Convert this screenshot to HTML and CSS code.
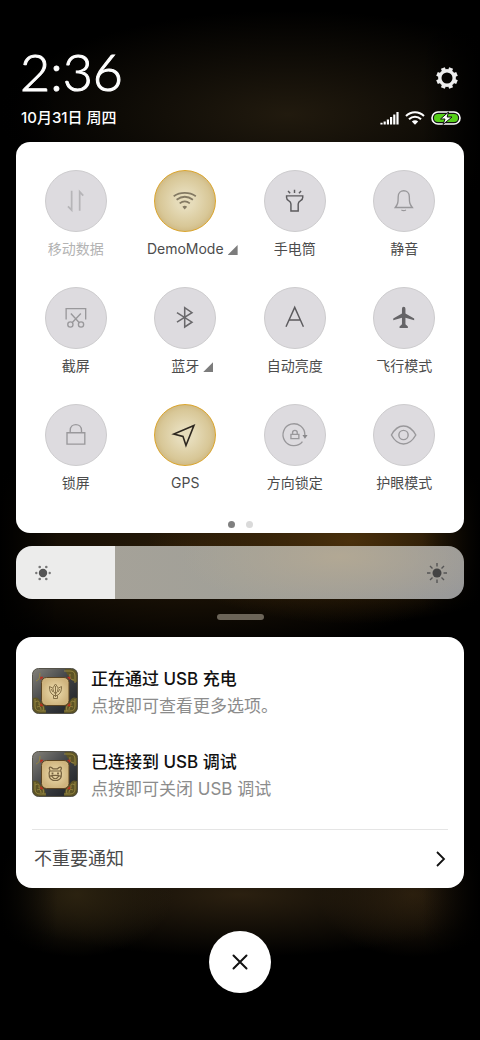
FILE: index.html
```
<!DOCTYPE html>
<html lang="zh-CN">
<head>
    <meta charset="UTF-8">
    <meta name="viewport" content="width=device-width, initial-scale=1.0">
    <title>控制中心</title>
    <link rel="stylesheet" href="styles.css">
</head>
<body>
    <!-- 时间、日期、状态图标 -->
    <header class="header">
        <div class="row">
            <time class="clock">2:36</time>
            <button class="gear" aria-label="设置">
                <svg width="24" height="24" viewBox="0 0 24 24">
                    <circle cx="12" cy="12" r="7.2" fill="none" stroke="#eee" stroke-width="3.4"/>
                    <g stroke="#eee" stroke-width="4.2">
                        <path d="M12 1.2V4" transform="rotate(22.5 12 12)"/>
                        <path d="M12 1.2V4" transform="rotate(67.5 12 12)"/>
                        <path d="M12 1.2V4" transform="rotate(112.5 12 12)"/>
                        <path d="M12 1.2V4" transform="rotate(157.5 12 12)"/>
                        <path d="M12 1.2V4" transform="rotate(202.5 12 12)"/>
                        <path d="M12 1.2V4" transform="rotate(247.5 12 12)"/>
                        <path d="M12 1.2V4" transform="rotate(292.5 12 12)"/>
                        <path d="M12 1.2V4" transform="rotate(337.5 12 12)"/>
                    </g>
                </svg>
            </button>
        </div>
        <div class="row">
            <span class="date">10月31日 周四</span>
            <div class="status">
                <svg width="19" height="14" viewBox="0 0 19 14" stroke="#fff" stroke-width="2.2">
                    <path d="M1.5 13.5V11.8M4.7 13.5V10.5M7.9 13.5V8.5M11.1 13.5V6M14.3 13.5V3.5M17.5 13.5V1"/>
                </svg>
                <svg width="20" height="14" viewBox="0 0 20 14" fill="none" stroke="#fff" stroke-width="2">
                    <path d="M1 5C6-.1 14-.1 19 5M4 8.3C7.5 4.8 12.5 4.8 16 8.3"/>
                    <path d="M6.8 10.6C8.6 8.8 11.4 8.8 13.2 10.6L10 13.8Z" fill="#fff" stroke="none"/>
                </svg>
                <svg width="30" height="14" viewBox="0 0 30 14">
                    <rect x="1" y="1" width="28" height="12" rx="6" fill="#111" stroke="#fff" stroke-width="1.6"/>
                    <rect x="3" y="3" width="24" height="8" rx="4" fill="#55cf18"/>
                    <path d="M17.5 1 9.5 8H14L12 13.5 21 6H16.2Z" fill="#fff" stroke="#111" stroke-width="1"/>
                </svg>
            </div>
        </div>
    </header>

    <main>
        <!-- 快捷开关 -->
        <section class="panel">
            <div class="tiles">
                <button class="tile disabled">
                    <svg class="disc" viewBox="0 0 62 62">
                        <path d="M22.7 36.5 26.5 40.5V20.5M34.8 41V21.5L38.5 25.5" stroke="#b6b5b8" stroke-width="1.8"/>
                    </svg>
                    <span class="label">移动数据</span>
                </button>
                <button class="tile on">
                    <svg class="disc" viewBox="0 0 62 62">
                        <g stroke="#847a63" stroke-width="1.8">
                            <path d="M19.3 26C26 21.5 35.5 21.5 42.2 26M22.3 29.7C27.5 25.9 34 25.9 39.2 29.7M25.5 33.5C28.8 30.9 32.7 30.9 36 33.5"/>
                        </g>
                        <path d="M30.7 39.8 28.3 37Q30.7 34.6 33.2 37Z" fill="#847a63"/>
                    </svg>
                    <span class="label">DemoMode<i class="corner"></i></span>
                </button>
                <button class="tile">
                    <svg class="disc" viewBox="0 0 62 62">
                        <path d="M30.5 19.5V22.8M23.8 20.7 26 23M37.3 20.7 35.1 23M22.3 25.7H39V27.5Q39 29.5 36.8 30.7 34.3 32 34.3 34V41.3H26.8V34Q26.8 32 24.4 30.7 22.3 29.5 22.3 27.5Z" stroke="#5c5b5e" stroke-width="1.5"/>
                    </svg>
                    <span class="label">手电筒</span>
                </button>
                <button class="tile">
                    <svg class="disc" viewBox="0 0 62 62">
                        <path d="M22 37.7C24.5 34.5 25 33 25 26.5 25 18.4 36.5 18.4 36.5 26.5 36.5 33 37 34.5 39.6 37.7ZM28.3 40.3Q30.7 41.7 33 40.3" stroke="#99989b" stroke-width="1.4"/>
                    </svg>
                    <span class="label">静音</span>
                </button>
                <button class="tile">
                    <svg class="disc" viewBox="0 0 62 62">
                        <g stroke="#99989b" stroke-width="1.4">
                            <path d="M20.8 32.5V21.3H41V32.5M25.7 26.3 34.2 35.7M36 26.3 27.2 35.7"/>
                            <circle cx="25.2" cy="37.7" r="2.7"/>
                            <circle cx="36.2" cy="37.7" r="2.7"/>
                        </g>
                    </svg>
                    <span class="label">截屏</span>
                </button>
                <button class="tile">
                    <svg class="disc" viewBox="0 0 62 62">
                        <path d="M22.7 25.5 38.2 35.3 30.7 40.3V20.3L38.2 25.5 22.7 35.2" stroke="#6a696c" stroke-width="1.6"/>
                    </svg>
                    <span class="label">蓝牙<i class="corner"></i></span>
                </button>
                <button class="tile">
                    <svg class="disc" viewBox="0 0 62 62">
                        <path d="M21.7 40 30.7 20 39.7 40M25 33H36.4" stroke="#5c5b5e" stroke-width="1.5"/>
                    </svg>
                    <span class="label">自动亮度</span>
                </button>
                <button class="tile">
                    <svg class="disc" viewBox="0 0 62 62">
                        <path d="M30.7 19.3Q32.5 19.3 32.5 21.5V26.3L41.5 31.5V33.3L32.5 30.8V37.5L35 39.8V41.3H26.4V39.8L28.9 37.5V30.8L19.9 33.3V31.5L28.9 26.3V21.5Q28.9 19.3 30.7 19.3Z" fill="#656467"/>
                    </svg>
                    <span class="label">飞行模式</span>
                </button>
                <button class="tile">
                    <svg class="disc" viewBox="0 0 62 62">
                        <path d="M21.7 28.7H40.1V40.5H21.7ZM25 28.5V26.3C25 18.3 36.7 18.3 36.7 26.3V28.5" stroke="#99989b" stroke-width="1.4"/>
                    </svg>
                    <span class="label">锁屏</span>
                </button>
                <button class="tile on">
                    <svg class="disc" viewBox="0 0 62 62">
                        <path d="M40.2 21.2 19.5 30 28.9 32.4 32 41.8Z" stroke="#2e2820" stroke-width="1.7"/>
                    </svg>
                    <span class="label">GPS</span>
                </button>
                <button class="tile">
                    <svg class="disc" viewBox="0 0 62 62">
                        <g stroke="#99989b" stroke-width="1.4">
                            <path d="M38.7 37.8A11.3 11.3 0 1 1 41.2 31M26.8 30.3H35V34.8H26.8ZM28.5 30V28.5C28.5 25.5 33.3 25.5 33.3 28.5V30"/>
                        </g>
                        <path d="M38.7 31H44L41.3 35Z" fill="#88878a"/>
                    </svg>
                    <span class="label">方向锁定</span>
                </button>
                <button class="tile">
                    <svg class="disc" viewBox="0 0 62 62">
                        <g stroke="#99989b" stroke-width="1.5">
                            <path d="M18 31Q23 21.7 30.5 21.7T43.2 31Q38 40.3 30.5 40.3T18 31Z"/>
                            <circle cx="30.5" cy="31" r="4.8"/>
                        </g>
                    </svg>
                    <span class="label">护眼模式</span>
                </button>
            </div>
            <div class="pages">
                <span class="dot active"></span>
                <span class="dot"></span>
            </div>
        </section>

        <!-- 亮度 -->
        <div class="brightness">
            <input class="range" type="range" min="0" max="100" value="22" aria-label="亮度">
            <svg class="sun low" width="18" height="18" viewBox="0 0 18 18" fill="#777">
                <circle cx="9" cy="9" r="4.2" fill="#555"/>
                <circle cx="2.3" cy="9" r="1.2"/>
                <circle cx="15.7" cy="9" r="1.2"/>
                <circle cx="5.7" cy="3" r="1.3"/>
                <circle cx="12.3" cy="3" r="1.3"/>
                <circle cx="5.7" cy="15" r="1.3"/>
                <circle cx="12.3" cy="15" r="1.3"/>
            </svg>
            <svg class="sun high" width="22" height="22" viewBox="0 0 22 22" stroke="#555" stroke-width="1.4">
                <circle cx="11" cy="11" r="4.5" fill="#444" stroke="none"/>
                <path d="M11 1V4.5M11 17.5V21M1 11H4.5M17.5 11H21M4 4 6.5 6.5M15.5 15.5 18 18M4 18 6.5 15.5M15.5 6.5 18 4"/>
            </svg>
        </div>

        <div class="handle"></div>

        <!-- 通知 -->
        <section class="notices">
            <article class="notice">
                <svg class="app" viewBox="0 0 46 46">
                    <defs>
                        <linearGradient id="frame" x1="0" y1="0" x2="1" y2="1">
                            <stop offset="0" stop-color="#85827a"/>
                            <stop offset=".5" stop-color="#3d4044"/>
                            <stop offset="1" stop-color="#1c1e22"/>
                        </linearGradient>
                        <radialGradient id="tablet">
                            <stop offset=".3" stop-color="#e5d1a0"/>
                            <stop offset="1" stop-color="#cfb47e"/>
                        </radialGradient>
                        <g id="plate">
                            <rect x=".5" y=".5" width="45" height="45" rx="6" fill="url(#frame)" stroke="#55534a"/>
                            <path d="M1 30Q6 28 8 33 13 36 14 45H7Q1 45 1 39ZM45 30Q40 28 38 33 33 36 32 45H39Q45 45 45 39ZM45 14Q40 14 38 9 34 6 33 1H39Q45 1 45 7Z" fill="#5d5426"/>
                            <g fill="none" stroke="#948440" stroke-width="1">
                                <path d="M3 31V38Q3 43 8 43H14M43 15V8Q43 3 38 3H32M43 31V38Q43 43 38 43H32"/>
                                <path d="M3 34Q8 31 7 37 13 36 11 43M43 34Q38 31 39 37 33 36 35 43M42 12Q37 12 38 6M5 39Q9 37 9 42M41 39Q37 37 37 42M4 13Q8 12 8 5"/>
                            </g>
                            <rect x="9.5" y="9.5" width="27.5" height="28" rx="5" fill="url(#tablet)" stroke="#5c4522"/>
                            <path d="M9 11.5V9.5H11M35.5 9.5H37.5V11.5M9 35.5V37.5H11M35.5 37.5H37.5V35.5" fill="none" stroke="#b92e1e" stroke-width="1.5"/>
                        </g>
                    </defs>
                    <use href="#plate"/>
                    <g fill="none" stroke="#857047" stroke-width="1">
                        <path d="M23.5 16 20.8 20Q21 24 23.5 26 26 24 26.2 20ZM23.5 18V29M20.5 20 17.5 18.5Q17 25 22 27.5M26.5 20 29.5 18.5Q30 25 25 27.5M19 21 21 24M28 21 26 24M21.5 27.5H25.5V30.5H21.5Z"/>
                    </g>
                </svg>
                <div class="text">
                    <h2 class="title">正在通过 USB 充电</h2>
                    <p class="desc">点按即可查看更多选项。</p>
                </div>
            </article>
            <article class="notice">
                <svg class="app" viewBox="0 0 46 46">
                    <use href="#plate"/>
                    <g fill="none" stroke="#75613f" stroke-width="1.2">
                        <path d="M18 19C16.5 17.5 17.5 15 19.5 16.5L21 17.8H25.5L27 16.5C29 15 30.5 17.5 28.5 19M18 19C16 23 16.5 29.5 23.3 29.5S30.5 23 28.5 19M17.5 20H29M17.5 25.2Q23.3 23.5 29 25.2M19.5 25Q23.3 30.5 27 25"/>
                        <path d="M20.5 21.5V23.5M26 21.5V23.5" stroke-width="1.8"/>
                    </g>
                </svg>
                <div class="text">
                    <h2 class="title">已连接到 USB 调试</h2>
                    <p class="desc">点按即可关闭 USB 调试</p>
                </div>
            </article>
            <a class="more" href="#">
                <span>不重要通知</span>
                <svg width="10" height="16" viewBox="0 0 10 16" fill="none" stroke="#111" stroke-width="1.8">
                    <path d="M1 1 8 8 1 15"/>
                </svg>
            </a>
        </section>

        <button class="close" aria-label="关闭">
            <svg width="16" height="16" viewBox="0 0 16 16" stroke="#111" stroke-width="2" stroke-linecap="round">
                <path d="M1.5 1.5 14.5 14.5M14.5 1.5 1.5 14.5"/>
            </svg>
        </button>
    </main>
</body>
</html>
```
FILE: styles.css
```
*{
    box-sizing: border-box;
}
body{
    margin: 0;
    padding: 42px 16px 47px;
    min-height: 100vh;
    font-family: Inter, "Noto Sans CJK SC", sans-serif;
    background:
        linear-gradient(90deg, #000, transparent 12%, transparent 88%, #000),
        radial-gradient(ellipse 60% 10% at 60% 11%, #211a0e, transparent),
        radial-gradient(ellipse 42% 8% at 73% 52%, #4a300c, transparent),
        radial-gradient(ellipse 60% 10% at 40% 53%, #2a1c09, transparent),
        radial-gradient(ellipse 20% 6% at 16% 86%, #2b2210, transparent),
        radial-gradient(ellipse 54% 6% at 50% 86%, #2b2010, transparent),
        radial-gradient(ellipse 20% 6% at 86% 86%, #2b1e0d, transparent),
        #000;
}
button{
    padding: 0;
    border: 0;
    background: none;
    font: inherit;
    cursor: pointer;
}
svg{
    display: block;
}

/* header */
.header{
    padding: 0 3px 12px 4px;
    color: #fff;
}
.row{
    display: flex;
    align-items: center;
    justify-content: space-between;
}
.clock{
    padding-bottom: 6px;
    font-family: Lato, sans-serif;
    font-size: 52px;
    font-weight: 300;
    line-height: 58px;
    -webkit-text-stroke: 1px #fff;
}
.gear{
    margin: 8px 2px 0 0;
}
.date{
    padding-left: 1px;
    font-size: 15px;
    font-weight: 500;
    line-height: 24px;
}
.status{
    display: flex;
    align-items: center;
    gap: 6px;
}

/* tiles */
.panel{
    padding: 28px 5px 5px;
    border-radius: 14px;
    background: #fff;
}
.tiles{
    display: grid;
    grid-template-columns: repeat(4, 1fr);
    row-gap: 27px;
}
.tile{
    display: flex;
    flex-direction: column;
    align-items: center;
    gap: 6px;
    color: #4c4c4c;
}
.disc{
    width: 62px;
    height: 62px;
    border: 1px solid #cdccce;
    border-radius: 50%;
    background: #dddbdf;
    fill: none;
}
.on .disc{
    border-color: #dba52c;
    background: radial-gradient(#e6dcba 20%, #d8c797 60%, #bd9b58);
}
.label{
    position: relative;
    font-size: 14px;
    line-height: 22px;
    white-space: nowrap;
}
.disabled .label{
    color: #b3b3b3;
}
.corner{
    position: absolute;
    left: 100%;
    bottom: 5px;
    width: 10px;
    height: 10px;
    margin-left: 4px;
    background: #7c7c7c;
    clip-path: polygon(100% 0, 100% 100%, 0 100%);
}
.pages{
    display: flex;
    justify-content: center;
    gap: 11px;
    padding-top: 27px;
}
.dot{
    width: 7px;
    height: 7px;
    border-radius: 50%;
    background: #dadada;
}
.dot.active{
    background: #808080;
}

/* brightness */
.brightness{
    position: relative;
    margin-top: 13px;
}
.range{
    display: block;
    width: 100%;
    height: 53px;
    margin: 0;
    border-radius: 16px;
    appearance: none;
    background:
        linear-gradient(90deg, #ececeb 22%, transparent 22%),
        radial-gradient(ellipse 35% 100% at 72% 20%, #b2a894, transparent),
        linear-gradient(90deg, #a8a399, #a1a098 50%, #999);
}
.range::-webkit-slider-thumb{
    appearance: none;
    width: 1px;
    height: 53px;
}
.sun{
    position: absolute;
    top: 50%;
    transform: translateY(-50%);
    pointer-events: none;
}
.low{
    left: 18px;
}
.high{
    right: 16px;
}
.handle{
    width: 47px;
    height: 6px;
    margin: 15px auto 17px;
    border-radius: 3px;
    background: #6b6458;
}

/* notifications */
.notices{
    padding: 28px 16px 0;
    border-radius: 16px;
    background: #fff;
}
.notice{
    display: flex;
    align-items: flex-start;
    gap: 13px;
    margin-bottom: 27px;
}
.app{
    width: 46px;
    height: 46px;
    margin-top: 3px;
}
.title,
.desc{
    margin: 0;
    font-size: 17px;
    line-height: 28px;
}
.title{
    color: #111;
    font-weight: 500;
}
.desc{
    color: #8c8c8c;
    line-height: 26px;
    padding-bottom: 2px;
}
.more{
    display: flex;
    align-items: center;
    justify-content: space-between;
    margin-top: -2px;
    padding: 0 2px;
    border-top: 1px solid #e5e5e5;
    color: #4a4a4a;
    font-size: 18px;
    line-height: 58px;
    text-decoration: none;
}
.close{
    display: grid;
    place-items: center;
    width: 62px;
    height: 62px;
    margin: 43px auto 0;
    border-radius: 50%;
    background: #fff;
}
```
